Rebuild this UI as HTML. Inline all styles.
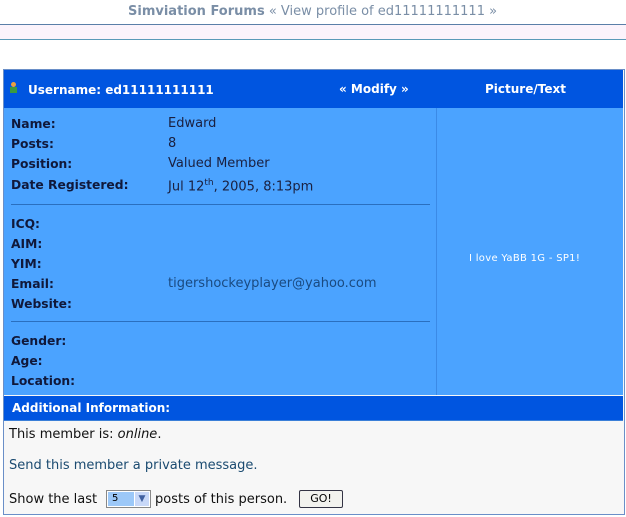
<!DOCTYPE html>
<html><head><style>
body{margin:0;width:626px;height:517px;background:#fff;position:relative;overflow:hidden;font-family:"DejaVu Sans","Liberation Sans",sans-serif;}
.a{position:absolute;white-space:nowrap;}
.l{font-size:12.3px;font-weight:bold;color:#10183a;}
.v{font-size:13px;color:#1a2040;}
.w{color:#fff;font-weight:bold;font-size:12px;}
</style></head><body>
<div class="a" style="left:128px;top:4px;font-size:13px;color:#7a8ea6;"><b>Simviation Forums</b> « View profile of ed11111111111 »</div>
<div class="a" style="left:0;top:24px;width:626px;height:1px;background:#5a7fa8"></div>
<div class="a" style="left:0;top:25px;width:626px;height:14px;background:#fbf3fb"></div>
<div class="a" style="left:0;top:39px;width:626px;height:1px;background:#5a9ab8"></div>

<div class="a" style="left:3px;top:69px;width:620px;height:444px;border:1px solid #6a8fc8;background:#f7f7f7"></div>
<div class="a" style="left:4px;top:70px;width:619px;height:38px;background:#0055e0"></div>
<div class="a" style="left:4px;top:108px;width:619px;height:287px;background:#4ba3ff"></div>
<div class="a" style="left:436px;top:108px;width:1px;height:287px;background:#3b8ae6"></div>
<div class="a" style="left:4px;top:396px;width:619px;height:24px;background:#0055e0"></div>
<div class="a" style="left:4px;top:420px;width:619px;height:1px;background:#3b7fd8"></div>

<div class="a" style="left:9px;top:82px;width:9px;height:12px;">
<div style="position:absolute;left:2px;top:0;width:5px;height:5px;border-radius:3px;background:#e8a040"></div>
<div style="position:absolute;left:1px;top:5px;width:7px;height:6px;background:#3a9a40"></div></div>
<div class="a w" style="left:28px;top:83px;">Username: ed11111111111</div>
<div class="a w" style="left:339px;top:82px;">« Modify »</div>
<div class="a w" style="left:485px;top:82px;">Picture/Text</div>

<div class="a l" style="left:11px;top:117px;">Name:</div><div class="a v" style="left:168px;top:116px;">Edward</div>
<div class="a l" style="left:11px;top:137px;">Posts:</div><div class="a v" style="left:168px;top:136px;">8</div>
<div class="a l" style="left:11px;top:157px;">Position:</div><div class="a v" style="left:168px;top:156px;">Valued Member</div>
<div class="a l" style="left:11px;top:178px;">Date Registered:</div><div class="a v" style="left:168px;top:178px;">Jul 12<sup style="font-size:9px">th</sup>, 2005, 8:13pm</div>
<div class="a" style="left:11px;top:204px;width:419px;height:1px;background:#2a6fbf"></div>
<div class="a l" style="left:11px;top:217px;">ICQ:</div>
<div class="a l" style="left:11px;top:237px;">AIM:</div>
<div class="a l" style="left:11px;top:257px;">YIM:</div>
<div class="a l" style="left:11px;top:277px;">Email:</div><div class="a v" style="left:168px;top:276px;color:#1a4a80">tigershockeyplayer@yahoo.com</div>
<div class="a l" style="left:11px;top:297px;">Website:</div>
<div class="a" style="left:11px;top:321px;width:419px;height:1px;background:#2a6fbf"></div>
<div class="a l" style="left:11px;top:334px;">Gender:</div>
<div class="a l" style="left:11px;top:354px;">Age:</div>
<div class="a l" style="left:11px;top:374px;">Location:</div>
<div class="a" style="left:469px;top:253px;font-size:10px;color:#fff;letter-spacing:0.3px">I love YaBB 1G - SP1!</div>

<div class="a w" style="left:12px;top:401px;">Additional Information:</div>
<div class="a v" style="left:9px;top:427px;color:#111">This member is: <i>online</i>.</div>
<div class="a v" style="left:9px;top:458px;color:#1a4a70">Send this member a private message.</div>
<div class="a v" style="left:9px;top:492px;color:#111">Show the last</div>
<div class="a" style="left:106px;top:490px;width:43px;height:16px;border:1px solid #888;background:#fff;">
<div style="position:absolute;left:1px;top:1px;width:26px;height:14px;background:#9cc8f8;font-size:10px;line-height:14px;padding-left:4px;box-sizing:border-box">5</div>
<div style="position:absolute;right:1px;top:1px;width:14px;height:14px;background:#c8d8f8;font-size:9px;line-height:14px;text-align:center;color:#4060a0">▼</div></div>
<div class="a v" style="left:155px;top:492px;color:#111">posts of this person.</div>
<div class="a" style="left:299px;top:490px;width:42px;height:16px;border:1px solid #334;border-radius:2px;background:#f2f2ee;font-size:11px;text-align:center;line-height:16px;">GO!</div>
</body></html>
